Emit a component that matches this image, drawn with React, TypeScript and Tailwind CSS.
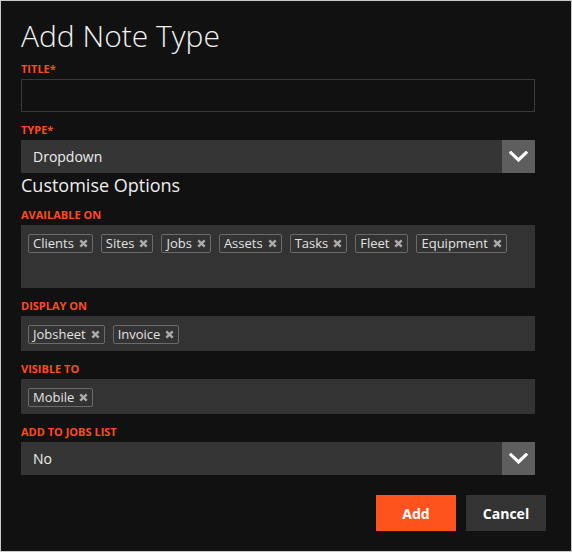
import type { ReactNode } from "react";

const FONT = "font-['Open_Sans','Noto_Sans',sans-serif]";

function Label({ children, className = "" }: { children: ReactNode; className?: string }) {
  return (
    <div
      className={`mb-[2px] h-[16px] text-[11px] font-bold uppercase leading-[16px] text-[#ff4b1f] ${className}`}
    >
      {children}
    </div>
  );
}

function Chevron() {
  return (
    <svg width="19" height="11" viewBox="0 0 19 11" fill="none" aria-hidden="true">
      <path
        d="M2 1.8 L9.5 9 L17 1.8"
        stroke="#ffffff"
        strokeWidth="3.2"
        strokeLinecap="square"
        strokeLinejoin="miter"
      />
    </svg>
  );
}

function Select({ value }: { value: string }) {
  return (
    <div className="flex h-[33px] items-stretch bg-[#353535]">
      <span className="flex flex-1 items-center pl-[12px] text-[14px] text-[#eeeeee]">
        {value}
      </span>
      <span className="flex w-[33px] items-center justify-center bg-[#5e5e5e]">
        <Chevron />
      </span>
    </div>
  );
}

function Tag({ label }: { label: string }) {
  return (
    <span className="inline-flex h-[19px] items-center gap-[5px] rounded-[2px] border border-[#6b6b6b] pl-[4px] pr-[4px] text-[13px] leading-[17px] text-[#e2e2e2]">
      {label}
      <svg width="9" height="9" viewBox="0 0 9 9" aria-hidden="true">
        <path d="M1.3 1.3 L7.7 7.7 M7.7 1.3 L1.3 7.7" stroke="#ababab" strokeWidth="2.4" />
      </svg>
    </span>
  );
}

function TagBox({ tags, tall = false }: { tags: string[]; tall?: boolean }) {
  return (
    <div
      className={`flex flex-wrap items-start gap-[8px] bg-[#333333] px-[7px] pt-[9px] ${
        tall ? "h-[63px]" : "h-[35px]"
      }`}
    >
      {tags.map((t) => (
        <Tag key={t} label={t} />
      ))}
    </div>
  );
}

export default function App() {
  return (
    <div
      className={`${FONT} h-[552px] w-[572px] border border-[#c9c9c9] bg-[#111111] pl-[20px] pr-[25px] text-white`}
    >
      <div className="w-[514px]">
        <h1 className="mt-[17px] h-[35px] text-[30px] font-light leading-[35px] text-[#f2f2f2]">
          Add Note Type
        </h1>

        <Label className="mt-[8px]">Title*</Label>
        <div className="h-[33px] border border-[#393939] bg-[#111111]" />

        <Label className="mt-[10px]">Type*</Label>
        <Select value="Dropdown" />

        <h2 className="h-[24px] text-[18px] leading-[24px] text-[#eeeeee]">Customise Options</h2>

        <Label className="mt-[10px]">Available on</Label>
        <TagBox tall tags={["Clients", "Sites", "Jobs", "Assets", "Tasks", "Fleet", "Equipment"]} />

        <Label className="mt-[10px]">Display on</Label>
        <TagBox tags={["Jobsheet", "Invoice"]} />

        <Label className="mt-[10px]">Visible to</Label>
        <TagBox tags={["Mobile"]} />

        <Label className="mt-[10px]">Add to jobs list</Label>
        <Select value="No" />
      </div>

      <div className="mt-[20px] flex justify-end gap-[10px]">
        <button
          type="button"
          className="h-[36px] w-[80px] bg-[#ff531d] text-[14px] font-bold text-white"
        >
          Add
        </button>
        <button
          type="button"
          className="h-[36px] w-[80px] bg-[#333333] text-[14px] font-bold text-white"
        >
          Cancel
        </button>
      </div>
    </div>
  );
}
